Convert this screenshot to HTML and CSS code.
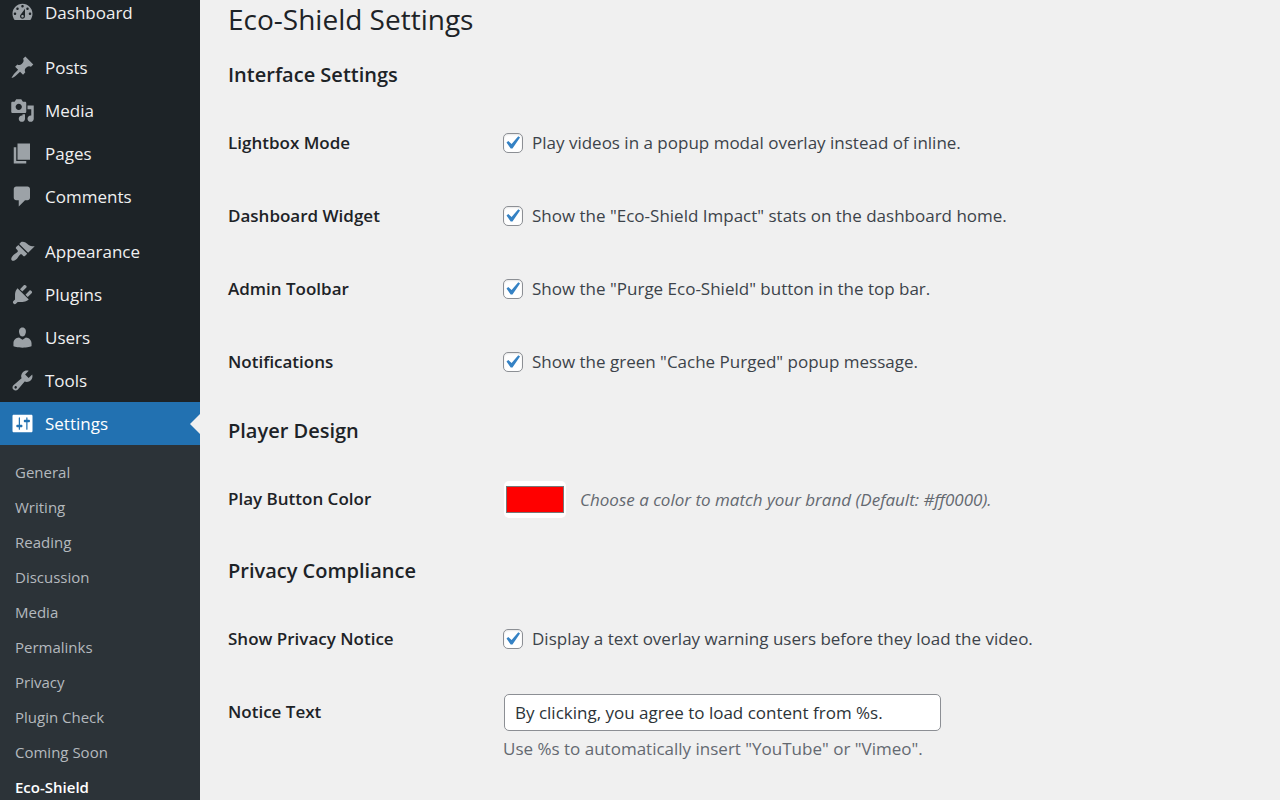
FILE: index.html
```html
<!DOCTYPE html>
<html lang="en">
<head>
<meta charset="utf-8">
<title>Eco-Shield Settings</title>
<link rel="stylesheet" href="styles.css">
</head>
<body>
<div class="layout">
  <nav class="sidebar" aria-label="Main menu">
    <ul class="menu">
      <li><a class="menu-link" href="#"><svg class="icon" viewBox="0 0 20 20" aria-hidden="true"><path d="M3.76 16h12.48c1.1-1.37 1.76-3.11 1.76-5 0-4.42-3.58-8-8-8s-8 3.58-8 8c0 1.89.66 3.63 1.76 5zM10 4c.55 0 1 .45 1 1s-.45 1-1 1-1-.45-1-1 .45-1 1-1zM6 6c.55 0 1 .45 1 1s-.45 1-1 1-1-.45-1-1 .45-1 1-1zm8 0c.55 0 1 .45 1 1s-.45 1-1 1-1-.45-1-1 .45-1 1-1zm-5.37 5.55L12 7v6c0 1.1-.9 2-2 2s-2-.9-2-2c0-.57.24-1.08.63-1.45zM4 10c.55 0 1 .45 1 1s-.45 1-1 1-1-.45-1-1 .45-1 1-1zm12 0c.55 0 1 .45 1 1s-.45 1-1 1-1-.45-1-1 .45-1 1-1zm-5 3c0-.55-.45-1-1-1s-1 .45-1 1 .45 1 1 1 1-.45 1-1z"/></svg>Dashboard</a></li>
      <li class="group-start"><a class="menu-link" href="#"><svg class="icon" viewBox="0 0 20 20" aria-hidden="true"><path d="M10.44 3.02l1.82-1.82 6.36 6.35-1.83 1.82c-1.05-.68-2.48-.57-3.41.36l-.75.75c-.92.93-1.04 2.35-.35 3.41l-1.83 1.82-2.41-2.41-2.8 2.79c-.42.42-3.38 2.71-3.8 2.29s1.86-3.39 2.28-3.81l2.79-2.79L4.1 9.36l1.83-1.82c1.05.69 2.48.57 3.4-.36l.75-.75c.93-.92 1.05-2.35.36-3.41z"/></svg>Posts</a></li>
      <li><a class="menu-link" href="#"><svg class="icon" viewBox="0 0 20 20" aria-hidden="true"><path d="M13 11V4c0-.55-.45-1-1-1h-1.67L9 1H5L3.67 3H2c-.55 0-1 .45-1 1v7c0 .55.45 1 1 1h10c.55 0 1-.45 1-1zM7 4.5c1.38 0 2.5 1.12 2.5 2.5S8.38 9.5 7 9.5 4.5 8.38 4.5 7 5.62 4.5 7 4.5zM14 6h5v10.5c0 1.38-1.12 2.5-2.5 2.5S14 17.88 14 16.5s1.12-2.5 2.5-2.5c.17 0 .34.02.5.05V9h-3V6zm-4 8.05V13h2v3.5c0 1.38-1.12 2.5-2.5 2.5S7 17.88 7 16.5 8.12 14 9.5 14c.17 0 .34.02.5.05z"/></svg>Media</a></li>
      <li><a class="menu-link" href="#"><svg class="icon" viewBox="0 0 20 20" aria-hidden="true"><path d="M6 15V2h10v13H6zm-1 1h8v2H3V5h2v11z"/></svg>Pages</a></li>
      <li><a class="menu-link" href="#"><svg class="icon" viewBox="0 0 20 20" aria-hidden="true"><path d="M5 2h9c1.1 0 2 .9 2 2v7c0 1.1-.9 2-2 2h-2l-5 5v-5H5c-1.1 0-2-.9-2-2V4c0-1.1.9-2 2-2z"/></svg>Comments</a></li>
      <li class="group-start"><a class="menu-link" href="#"><svg class="icon" viewBox="0 0 20 20" aria-hidden="true"><path d="M14.48 11.06L7.41 3.99l1.5-1.5c.5-.56 2.3-.47 3.51.32 1.21.8 1.43 1.28 2.91 2.1 1.18.64 2.45 1.26 4.45.85zm-.71.71L6.7 4.7 4.93 6.47c-.39.39-.39 1.02 0 1.41l1.06 1.06c.39.39.39 1.03 0 1.42-.6.6-1.43 1.11-2.21 1.69-.35.26-.7.53-1.01.84C1.43 14.23.4 16.08 1.4 17.07c.99 1 2.84-.03 4.18-1.36.31-.31.58-.66.85-1.02.57-.78 1.08-1.61 1.69-2.21.39-.39 1.02-.39 1.41 0l1.06 1.06c.39.39 1.02.39 1.41 0z"/></svg>Appearance</a></li>
      <li><a class="menu-link" href="#"><svg class="icon" viewBox="0 0 20 20" aria-hidden="true"><path d="M13.11 4.36L9.87 7.6 8 5.73l3.24-3.24c.35-.34 1.05-.2 1.56.32.52.51.66 1.21.31 1.55zm-8 1.77l.91-1.12 9.01 9.01-1.19.84c-.71.71-2.63 1.16-3.82 1.16H6.14L4.9 17.26c-.59.59-1.54.59-2.12 0-.59-.58-.59-1.53 0-2.12l1.24-1.24v-3.88c0-1.13.4-3.19 1.09-3.89zm7.26 3.97l3.24-3.24c.34-.35 1.04-.21 1.55.31.52.51.66 1.21.31 1.55l-3.24 3.25z"/></svg>Plugins</a></li>
      <li><a class="menu-link" href="#"><svg class="icon" viewBox="0 0 20 20" aria-hidden="true"><path d="M10 9.25c-2.27 0-2.73-3.44-2.73-3.44C7 4.02 7.82 2 9.97 2c2.16 0 2.98 2.02 2.71 3.81 0 0-.41 3.44-2.68 3.44zm0 2.57L12.72 10c2.39 0 4.52 2.33 4.52 4.53v2.49s-3.65 1.13-7.24 1.13c-3.65 0-7.24-1.13-7.24-1.13v-2.49c0-2.25 1.94-4.48 4.47-4.48z"/></svg>Users</a></li>
      <li><a class="menu-link" href="#"><svg class="icon" viewBox="0 0 20 20" aria-hidden="true"><path d="M16.68 9.77c-1.34 1.34-3.3 1.67-4.95.99l-5.41 6.52c-.99.99-2.59.99-3.58 0s-.99-2.59 0-3.57l6.52-5.42c-.68-1.65-.35-3.61.99-4.95 1.28-1.28 3.12-1.62 4.72-1.06l-2.89 2.89 2.82 2.82 2.86-2.87c.53 1.58.18 3.39-1.08 4.65zM3.81 16.21c.4.39 1.04.39 1.43 0 .4-.4.4-1.04 0-1.43-.39-.4-1.03-.4-1.43 0-.39.39-.39 1.03 0 1.43z"/></svg>Tools</a></li>
      <li>
        <a class="menu-link current" href="#"><svg class="icon" viewBox="0 0 20 20" aria-hidden="true"><path d="M18 16V4c0-.55-.45-1-1-1H3c-.55 0-1 .45-1 1v12c0 .55.45 1 1 1h14c.55 0 1-.45 1-1zM8 11h1c.55 0 1 .45 1 1s-.45 1-1 1H8v1.5c0 .28-.22.5-.5.5s-.5-.22-.5-.5V13H6c-.55 0-1-.45-1-1s.45-1 1-1h1V5.5c0-.28.22-.5.5-.5s.5.22.5.5V11zm5-2h-1c-.55 0-1-.45-1-1s.45-1 1-1h1V5.5c0-.28.22-.5.5-.5s.5.22.5.5V7h1c.55 0 1 .45 1 1s-.45 1-1 1h-1v5.5c0 .28-.22.5-.5.5s-.5-.22-.5-.5V9z"/></svg>Settings</a>
        <ul class="submenu">
          <li><a href="#">General</a></li>
          <li><a href="#">Writing</a></li>
          <li><a href="#">Reading</a></li>
          <li><a href="#">Discussion</a></li>
          <li><a href="#">Media</a></li>
          <li><a href="#">Permalinks</a></li>
          <li><a href="#">Privacy</a></li>
          <li><a href="#">Plugin Check</a></li>
          <li><a href="#">Coming Soon</a></li>
          <li><a class="active" href="#" aria-current="page">Eco-Shield</a></li>
        </ul>
      </li>
    </ul>
  </nav>
  <main class="content">
    <h1>Eco-Shield Settings</h1>
    <form>
      <h2>Interface Settings</h2>
      <div class="rows">
        <div class="row"><span class="name">Lightbox Mode</span><label class="check"><input type="checkbox" checked><span class="box"><svg viewBox="0 0 20 20" aria-hidden="true"><path d="M14.83 4.89l1.34.94-5.81 8.38H9.02L5.78 9.67l1.34-1.25 2.57 2.4z"/></svg></span>Play videos in a popup modal overlay instead of inline.</label></div>
        <div class="row"><span class="name">Dashboard Widget</span><label class="check"><input type="checkbox" checked><span class="box"><svg viewBox="0 0 20 20" aria-hidden="true"><path d="M14.83 4.89l1.34.94-5.81 8.38H9.02L5.78 9.67l1.34-1.25 2.57 2.4z"/></svg></span>Show the "Eco-Shield Impact" stats on the dashboard home.</label></div>
        <div class="row"><span class="name">Admin Toolbar</span><label class="check"><input type="checkbox" checked><span class="box"><svg viewBox="0 0 20 20" aria-hidden="true"><path d="M14.83 4.89l1.34.94-5.81 8.38H9.02L5.78 9.67l1.34-1.25 2.57 2.4z"/></svg></span>Show the "Purge Eco-Shield" button in the top bar.</label></div>
        <div class="row"><span class="name">Notifications</span><label class="check"><input type="checkbox" checked><span class="box"><svg viewBox="0 0 20 20" aria-hidden="true"><path d="M14.83 4.89l1.34.94-5.81 8.38H9.02L5.78 9.67l1.34-1.25 2.57 2.4z"/></svg></span>Show the green "Cache Purged" popup message.</label></div>
      </div>
      <h2>Player Design</h2>
      <div class="rows">
        <div class="row"><label class="name" for="play-color">Play Button Color</label><div class="color-field"><input type="color" id="play-color" value="#ff0000"><em class="hint">Choose a color to match your brand (Default: #ff0000).</em></div></div>
      </div>
      <h2>Privacy Compliance</h2>
      <div class="rows">
        <div class="row"><span class="name">Show Privacy Notice</span><label class="check"><input type="checkbox" checked><span class="box"><svg viewBox="0 0 20 20" aria-hidden="true"><path d="M14.83 4.89l1.34.94-5.81 8.38H9.02L5.78 9.67l1.34-1.25 2.57 2.4z"/></svg></span>Display a text overlay warning users before they load the video.</label></div>
        <div class="row"><label class="name" for="notice-text">Notice Text</label><div class="text-field"><input type="text" id="notice-text" value="By clicking, you agree to load content from %s."><p class="hint">Use %s to automatically insert "YouTube" or "Vimeo".</p></div></div>
      </div>
    </form>
  </main>
</div>
</body>
</html>
```
FILE: styles.css
```css
* {
  box-sizing: border-box;
}

html,
body {
  height: 100%;
}

body {
  margin: 0;
  overflow: hidden;
  background: #f0f0f0;
  color: #3c434a;
  font-family: "Segoe UI", "Open Sans", "Noto Sans", sans-serif;
  font-size: 17px;
  line-height: 24px;
}

ul {
  margin: 0;
  padding: 0;
  list-style: none;
}

.layout {
  display: flex;
  min-height: 100%;
}

/* Sidebar */
.sidebar {
  flex: 0 0 200px;
  background: #1d2327;
}

.menu {
  margin-top: -9px;
}

.group-start {
  margin-top: 12px;
}

.menu-link {
  display: flex;
  align-items: center;
  gap: 10px;
  height: 43px;
  padding-left: 10px;
  color: #f0f0f1;
  text-decoration: none;
}

.icon {
  width: 25px;
  height: 25px;
  fill: #9ca2a7;
}

.current {
  position: relative;
  background: #2271b1;
  color: #fff;
}

.current .icon {
  fill: #fff;
}

.current::after {
  content: "";
  position: absolute;
  right: 0;
  top: 12px;
  border: 10px solid transparent;
  border-left: 0;
  border-right-color: #f0f0f0;
}

.submenu {
  padding: 10px 0;
  background: #2c3338;
}

.submenu a {
  display: block;
  padding-left: 15px;
  color: #b4b9be;
  font-size: 15px;
  line-height: 35px;
  text-decoration: none;
}

.submenu .active {
  color: #fff;
  font-weight: 600;
}

/* Settings form */
.content {
  flex: 1;
  min-width: 0;
  padding: 1px 28px;
}

h1,
h2 {
  margin: 0 0 24px;
  color: #1d2327;
}

h1 {
  font-size: 28px;
  font-weight: 400;
  line-height: 36px;
}

h2 {
  font-size: 20px;
  font-weight: 600;
  line-height: 28px;
}

.rows {
  margin-bottom: 12px;
}

.row {
  display: grid;
  grid-template-columns: 275px 1fr;
  align-items: start;
  padding: 18px 0 31px;
}

.name {
  color: #1d2327;
  font-weight: 600;
}

.check {
  display: flex;
  align-items: center;
  gap: 9px;
  position: relative;
}

.check input {
  position: absolute;
  width: 20px;
  height: 20px;
  margin: 0;
  opacity: 0;
}

.box {
  display: flex;
  flex: none;
  align-items: center;
  justify-content: center;
  width: 20px;
  height: 20px;
  border: 1px solid #8c8f94;
  border-radius: 5px;
  background: #fff;
  box-shadow: inset 0 1px 2px rgba(0, 0, 0, 0.1);
}

.box svg {
  display: none;
  width: 26px;
  height: 26px;
  flex: none;
  margin-right: 2px;
  fill: #3582c4;
}

.check input:checked + .box svg {
  display: block;
}

.hint {
  margin: 0;
  color: #646970;
}

.color-field {
  display: flex;
  align-items: center;
  gap: 14px;
  margin: -6px 0 -4px;
  padding-left: 1px;
}

input[type="color"] {
  width: 62px;
  height: 37px;
  padding: 0;
  border: 0;
  border-radius: 5px;
  background: #fff;
}

input[type="color"]::-webkit-color-swatch-wrapper {
  padding: 5px 2px;
}

input[type="color"]::-webkit-color-swatch {
  border: 1px solid #777;
}

.text-field {
  margin-top: -6px;
}

input[type="text"] {
  display: block;
  width: 437px;
  max-width: 100%;
  height: 37px;
  margin: 0 1px 6px;
  padding: 0 10px;
  border: 1px solid #8c8f94;
  border-radius: 5px;
  background: #fff;
  color: #2c3338;
  font: inherit;
}
```
